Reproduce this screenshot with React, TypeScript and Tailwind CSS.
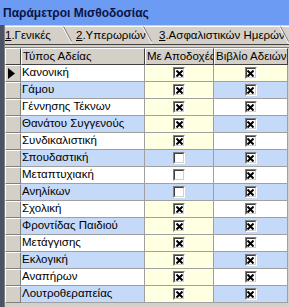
import React from "react";

type Row = { name: string; paid: boolean; book: boolean };

const ROWS: Row[] = [
  { name: "Κανονική", paid: true, book: true },
  { name: "Γάμου", paid: true, book: true },
  { name: "Γέννησης Τέκνων", paid: true, book: true },
  { name: "Θανάτου Συγγενούς", paid: true, book: true },
  { name: "Συνδικαλιστική", paid: true, book: true },
  { name: "Σπουδαστική", paid: false, book: true },
  { name: "Μεταπτυχιακή", paid: false, book: true },
  { name: "Ανηλίκων", paid: false, book: true },
  { name: "Σχολική", paid: true, book: true },
  { name: "Φροντίδας Παιδιού", paid: true, book: true },
  { name: "Μετάγγισης", paid: true, book: true },
  { name: "Εκλογική", paid: true, book: true },
  { name: "Αναπήρων", paid: true, book: true },
  { name: "Λουτροθεραπείας", paid: true, book: true },
];

function CheckBox({ checked }: { checked: boolean }) {
  return (
    <div className="box-border flex h-[12px] w-[12px] items-center justify-center border-t border-l border-t-[#808080] border-l-[#808080] border-b border-r border-b-white border-r-white bg-white">
      <div className="box-border flex h-[10px] w-[10px] items-center justify-center border-t border-l border-t-[#404040] border-l-[#404040] border-b border-r border-b-[#d4d0c8] border-r-[#d4d0c8]">
        {checked && (
          <svg width="7" height="7" viewBox="0 0 7 7">
            <path d="M0.5 0.5 L6.5 6.5 M6.5 0.5 L0.5 6.5" stroke="#000" strokeWidth="2" />
          </svg>
        )}
      </div>
    </div>
  );
}

function Tab({ num, label, width }: { num: string; label: string; width: string }) {
  return (
    <div className={`relative flex h-[18px] items-center whitespace-nowrap border-t border-white ${width}`}>
      <span>
        <span className="underline">{num}</span>.{label}
      </span>
      <svg className="absolute right-0 top-[-1px]" width="10" height="18" viewBox="0 0 10 18">
        <path d="M0.5 0.5 L9.5 17.5" stroke="#fff" strokeWidth="1" />
        <path d="M1.5 0.5 L9.5 15.5" stroke="#808080" strokeWidth="1" />
      </svg>
    </div>
  );
}

const head =
  "box-border flex shrink-0 items-center overflow-hidden whitespace-nowrap border-t border-l border-white border-r border-b border-r-[#404040] border-b-[#404040] pl-[1px]";

export default function App() {
  return (
    <div className="flex h-[307px] w-[289px] flex-col overflow-hidden bg-[#d4d0c8] font-['Liberation_Sans',Arial,sans-serif] text-[11.5px] text-black">
      <div className="flex h-[25px] shrink-0 items-center bg-[#6c9bf3] pl-[3px] text-[12px] font-bold text-[#0c1446]">
        Παράμετροι Μισθοδοσίας
      </div>
      <div className="flex flex-1 flex-row">
        <div className="w-[4px] shrink-0 bg-[#4b5467]" />
        <div className="w-[1px] shrink-0 bg-[#808080]" />
        <div className="flex flex-1 flex-col">
          <div className="flex h-[20px] shrink-0 items-end border-b border-[#404040] pt-[1px]">
            <Tab num="1" label="Γενικές" width="w-[67px]" />
            <Tab num="2" label="Υπερωριών" width="w-[80px] pl-[4px]" />
            <Tab num="3" label="Ασφαλιστικών Ημερών" width="w-[137px] pl-[7px]" />
          </div>
          <div className="h-[2px] shrink-0" />
          <div className="flex flex-col">
            <div className="flex h-[18px] border-t border-[#808080]">
              <div className={`${head} w-[16px] bg-[#d4d0c8]`} />
              <div className={`${head} w-[124px]`}>Τύπος Αδείας</div>
              <div className={`${head} w-[69px]`}>Με Αποδοχές</div>
              <div className={`${head} w-[74px]`}>Βιβλίο Αδειών</div>
            </div>
            {ROWS.map((r, i) => {
              const base = i % 2 === 1 ? "bg-[#c4daf8]" : "bg-white";
              const paidBg = r.paid ? "bg-[#ffffe1]" : base;
              const bookBg = i === 0 ? "bg-[#ffffe1]" : base;
              return (
                <div key={r.name} className="flex h-[17px]">
                  <div className="box-border flex w-[16px] shrink-0 items-center border-t border-l border-white border-r border-b border-r-[#808080] border-b-[#808080] bg-[#d4d0c8] pl-[2px]">
                    {i === 0 && (
                      <svg width="7" height="11" viewBox="0 0 7 11">
                        <path d="M0 0 L7 5.5 L0 11 Z" fill="#000" />
                      </svg>
                    )}
                  </div>
                  <div className={`box-border flex w-[124px] shrink-0 items-center whitespace-nowrap border-r border-b border-[#a0a0a0] pl-[1px] ${base}`}>
                    {r.name}
                  </div>
                  <div className={`box-border flex w-[69px] shrink-0 items-center justify-center border-r border-b border-[#a0a0a0] ${paidBg}`}>
                    <CheckBox checked={r.paid} />
                  </div>
                  <div className={`box-border flex w-[74px] shrink-0 items-center justify-center border-r border-b border-[#a0a0a0] ${bookBg}`}>
                    <CheckBox checked={r.book} />
                  </div>
                </div>
              );
            })}
          </div>
        </div>
      </div>
    </div>
  );
}
